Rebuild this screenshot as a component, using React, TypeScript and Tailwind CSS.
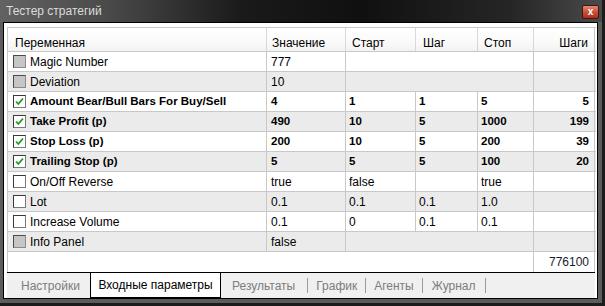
import React from "react";

type Row = {
  name: string;
  value: string;
  start?: string;
  step?: string;
  stop?: string;
  steps?: string;
  state: "checked" | "unchecked" | "disabled";
};

const rows: Row[] = [
  { name: "Magic Number", value: "777", state: "disabled" },
  { name: "Deviation", value: "10", state: "disabled" },
  {
    name: "Amount Bear/Bull Bars For Buy/Sell",
    value: "4",
    start: "1",
    step: "1",
    stop: "5",
    steps: "5",
    state: "checked",
  },
  { name: "Take Profit (p)", value: "490", start: "10", step: "5", stop: "1000", steps: "199", state: "checked" },
  { name: "Stop Loss (p)", value: "200", start: "10", step: "5", stop: "200", steps: "39", state: "checked" },
  { name: "Trailing Stop (p)", value: "5", start: "5", step: "5", stop: "100", steps: "20", state: "checked" },
  { name: "On/Off Reverse", value: "true", start: "false", step: "", stop: "true", steps: "", state: "unchecked" },
  { name: "Lot", value: "0.1", start: "0.1", step: "0.1", stop: "1.0", steps: "", state: "unchecked" },
  { name: "Increase Volume", value: "0.1", start: "0", step: "0.1", stop: "0.1", steps: "", state: "unchecked" },
  { name: "Info Panel", value: "false", state: "disabled" },
];

function Checkbox({ state }: { state: Row["state"] }) {
  if (state === "disabled") {
    return (
      <span className="w-[13px] h-[13px] shrink-0 border border-t-[#4a4a4a] border-l-[#4a4a4a] border-r-[#8a8a8a] border-b-[#8a8a8a] bg-[#c6c6c6]" />
    );
  }
  return (
    <span className="w-[13px] h-[13px] shrink-0 border border-t-[#3a3a3a] border-l-[#3a3a3a] border-r-[#7a7a7a] border-b-[#7a7a7a] bg-white flex items-center justify-center">
      {state === "checked" && (
        <svg width="11" height="11" viewBox="0 0 11 11">
          <path d="M2 5.5 L4.3 8 L9 2.5" fill="none" stroke="#1f9a1f" strokeWidth="1.8" />
        </svg>
      )}
    </span>
  );
}

export default function App() {
  return (
    <div className="w-[605px] h-[306px] bg-[#5c5c5c] border-r-[3px] border-b-[3px] border-[#1c1c1c] flex flex-col font-['Liberation_Sans',Arial,sans-serif] text-[12px] text-black">
      {/* заголовок окна */}
      <div className="h-[22px] shrink-0 flex items-center justify-between pl-[6px] pr-[3px] bg-[linear-gradient(90deg,#626262_0%,#4a4a4a_18%,#1a1a1a_40%,#101010_60%,#262626_85%,#4a4a4a_100%)]">
        <span className="text-[#dcdcdc] text-[12px] leading-none">Тестер стратегий</span>
        <div className="w-[17px] h-[14px] mt-[1px] rounded-[2px] border border-[#4a1408] bg-[linear-gradient(180deg,#e08a78_0%,#c9503a_50%,#a8301c_100%)] flex items-center justify-center text-white text-[10px] font-bold leading-none">
          x
        </div>
      </div>

      {/* содержимое */}
      <div className="flex-1 ml-[3px] mr-[4px] mb-[4px] border border-black bg-white flex flex-col pt-[4px] pl-[3px] pr-[1px]">
        <div className="border-l border-t border-[#c8c8c8] flex flex-col">
          {/* шапка */}
          <div className="h-[24px] flex border-b border-[#c8c8c8] bg-[linear-gradient(180deg,#ffffff_0%,#fafafa_60%,#f2f2f2_100%)]">
            <div className="w-[259px] border-r border-[#d8d8d8] pl-[7px] pt-[6px]">Переменная</div>
            <div className="w-[79px] border-r border-[#d8d8d8] pl-[5px] pt-[6px]">Значение</div>
            <div className="w-[70px] border-r border-[#d8d8d8] pl-[6px] pt-[6px]">Старт</div>
            <div className="w-[62px] border-r border-[#d8d8d8] pl-[7px] pt-[6px]">Шаг</div>
            <div className="w-[56px] border-r border-[#d8d8d8] pl-[6px] pt-[6px]">Стоп</div>
            <div className="w-[61px] border-r border-[#c8c8c8] pr-[6px] pt-[6px] text-right">Шаги</div>
          </div>

          {rows.map((r, i) => {
            const bold = r.state === "checked";
            return (
              <div
                key={r.name}
                className={`h-[20px] flex border-b border-[#c8c8c8] ${i % 2 === 1 ? "bg-[#ebebeb]" : "bg-white"} ${bold ? "font-bold text-[11.5px]" : ""}`}
              >
                <div className="w-[259px] border-r border-[#c8c8c8] flex items-center gap-[4px] pl-[5px]">
                  <Checkbox state={r.state} />
                  <span className="whitespace-nowrap">{r.name}</span>
                </div>
                <div className="w-[79px] border-r border-[#c8c8c8] flex items-center pl-[4px]">{r.value}</div>
                {r.state === "disabled" ? (
                  <>
                    <div className="w-[188px] border-r border-[#c8c8c8]" />
                    <div className="w-[61px] border-r border-[#c8c8c8]" />
                  </>
                ) : (
                  <>
                    <div className="w-[70px] border-r border-[#c8c8c8] flex items-center pl-[3px]">{r.start}</div>
                    <div className="w-[62px] border-r border-[#c8c8c8] flex items-center pl-[3px]">{r.step}</div>
                    <div className="w-[56px] border-r border-[#c8c8c8] flex items-center pl-[3px]">{r.stop}</div>
                    <div className="w-[61px] border-r border-[#c8c8c8] flex items-center justify-end pr-[5px]">
                      {r.steps}
                    </div>
                  </>
                )}
              </div>
            );
          })}

          {/* итог */}
          <div className="h-[20px] flex bg-white">
            <div className="w-[526px] border-r border-[#c8c8c8]" />
            <div className="w-[61px] border-r border-[#c8c8c8] flex items-center justify-end pr-[5px] text-[#1a1a2a]">
              776100
            </div>
          </div>
        </div>

        {/* вкладки */}
        <div className="flex-1 border-t border-black bg-[#f0f0f0] flex items-stretch text-[12px] text-[#7c7c7c] mr-[1px]">
          <div className="w-[83px] flex items-center pl-[14px]">Настройки</div>
          <div className="w-[131px] bg-white border-x border-b border-black flex items-center justify-center text-black">
            Входные параметры
          </div>
          <div className="flex items-center pl-[11px] pr-[12px]">Результаты</div>
          <span className="w-px h-[15px] self-center bg-[#9a9a9a]" />
          <div className="flex items-center px-[8px]">График</div>
          <span className="w-px h-[15px] self-center bg-[#9a9a9a]" />
          <div className="flex items-center px-[8px]">Агенты</div>
          <span className="w-px h-[15px] self-center bg-[#9a9a9a]" />
          <div className="flex items-center px-[9px]">Журнал</div>
          <span className="w-px h-[15px] self-center bg-[#9a9a9a]" />
        </div>
      </div>
    </div>
  );
}
